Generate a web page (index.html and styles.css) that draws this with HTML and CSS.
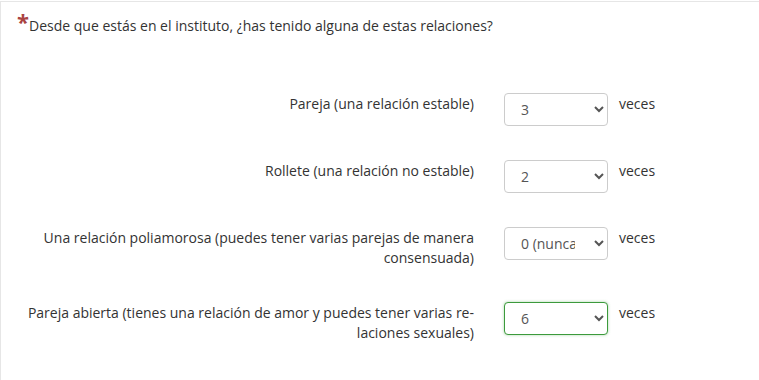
FILE: index.html
```html
<!DOCTYPE html>
<html lang="es">
<head>
  <meta charset="UTF-8">
  <title>Relaciones</title>
  <link rel="stylesheet" href="styles.css">
</head>
<body>
  <div class="question">
    <div class="question-title"><span class="required">*</span>Desde que estás en el instituto, ¿has tenido alguna de estas relaciones?</div>
    <div class="rows">
      <div class="row">
        <label class="row-label" for="q1">Pareja (una relación estable)</label>
        <select id="q1" class="times">
          <option>0 (nunca)</option><option>1</option><option>2</option><option selected>3</option><option>4</option><option>5</option><option>6</option>
        </select>
        <span class="unit">veces</span>
      </div>
      <div class="row">
        <label class="row-label" for="q2">Rollete (una relación no estable)</label>
        <select id="q2" class="times">
          <option>0 (nunca)</option><option>1</option><option selected>2</option><option>3</option><option>4</option><option>5</option><option>6</option>
        </select>
        <span class="unit">veces</span>
      </div>
      <div class="row">
        <label class="row-label" for="q3">Una relación poliamorosa (puedes tener varias parejas de manera consensuada)</label>
        <select id="q3" class="times">
          <option selected>0 (nunca)</option><option>1</option><option>2</option><option>3</option><option>4</option><option>5</option><option>6</option>
        </select>
        <span class="unit">veces</span>
      </div>
      <div class="row">
        <label class="row-label" for="q4">Pareja abierta (tienes una relación de amor y puedes tener varias re&shy;laciones sexuales)</label>
        <select id="q4" class="times valid">
          <option>0 (nunca)</option><option>1</option><option>2</option><option>3</option><option>4</option><option>5</option><option selected>6</option>
        </select>
        <span class="unit">veces</span>
      </div>
    </div>
  </div>
</body>
</html>
```

FILE: styles.css
```css
html,
body {
  margin: 0;
  background: #fff;
}
body {
  padding-top: 1px;
  font-family: "Open Sans", sans-serif;
  font-size: 14px;
  line-height: 20px;
  color: #333;
  overflow: hidden;
}
.question {
  border-top: 1px solid #e6e6e6;
  border-left: 1px solid #e6e6e6;
  height: 390px;
}
.question-title {
  padding: 14px 0 0 16px;
}
.required {
  color: #a94442;
  font-weight: bold;
  font-size: 22px;
  line-height: 0;
  vertical-align: 1px;
}
.rows {
  display: flex;
  flex-direction: column;
  gap: 34px;
  margin-top: 57px;
}
.row {
  display: flex;
  align-items: flex-start;
}
.row-label {
  box-sizing: border-box;
  width: 473px;
  padding: 1px 0 0 18px;
  text-align: right;
  hyphens: manual;
}
.times {
  box-sizing: border-box;
  margin-left: 30px;
  width: 104px;
  height: 33px;
  padding: 0 16px 0 12px;
  font-family: "Open Sans", sans-serif;
  font-size: 14px;
  color: #555;
  background: #fff;
  border: 1px solid #ccc;
  border-radius: 4px;
}
.times.valid {
  border-color: #3c9a3c;
  box-shadow: 0 0 3px rgba(60, 160, 60, 0.45);
}
.unit {
  margin-left: 11px;
  padding-top: 1px;
}
```
